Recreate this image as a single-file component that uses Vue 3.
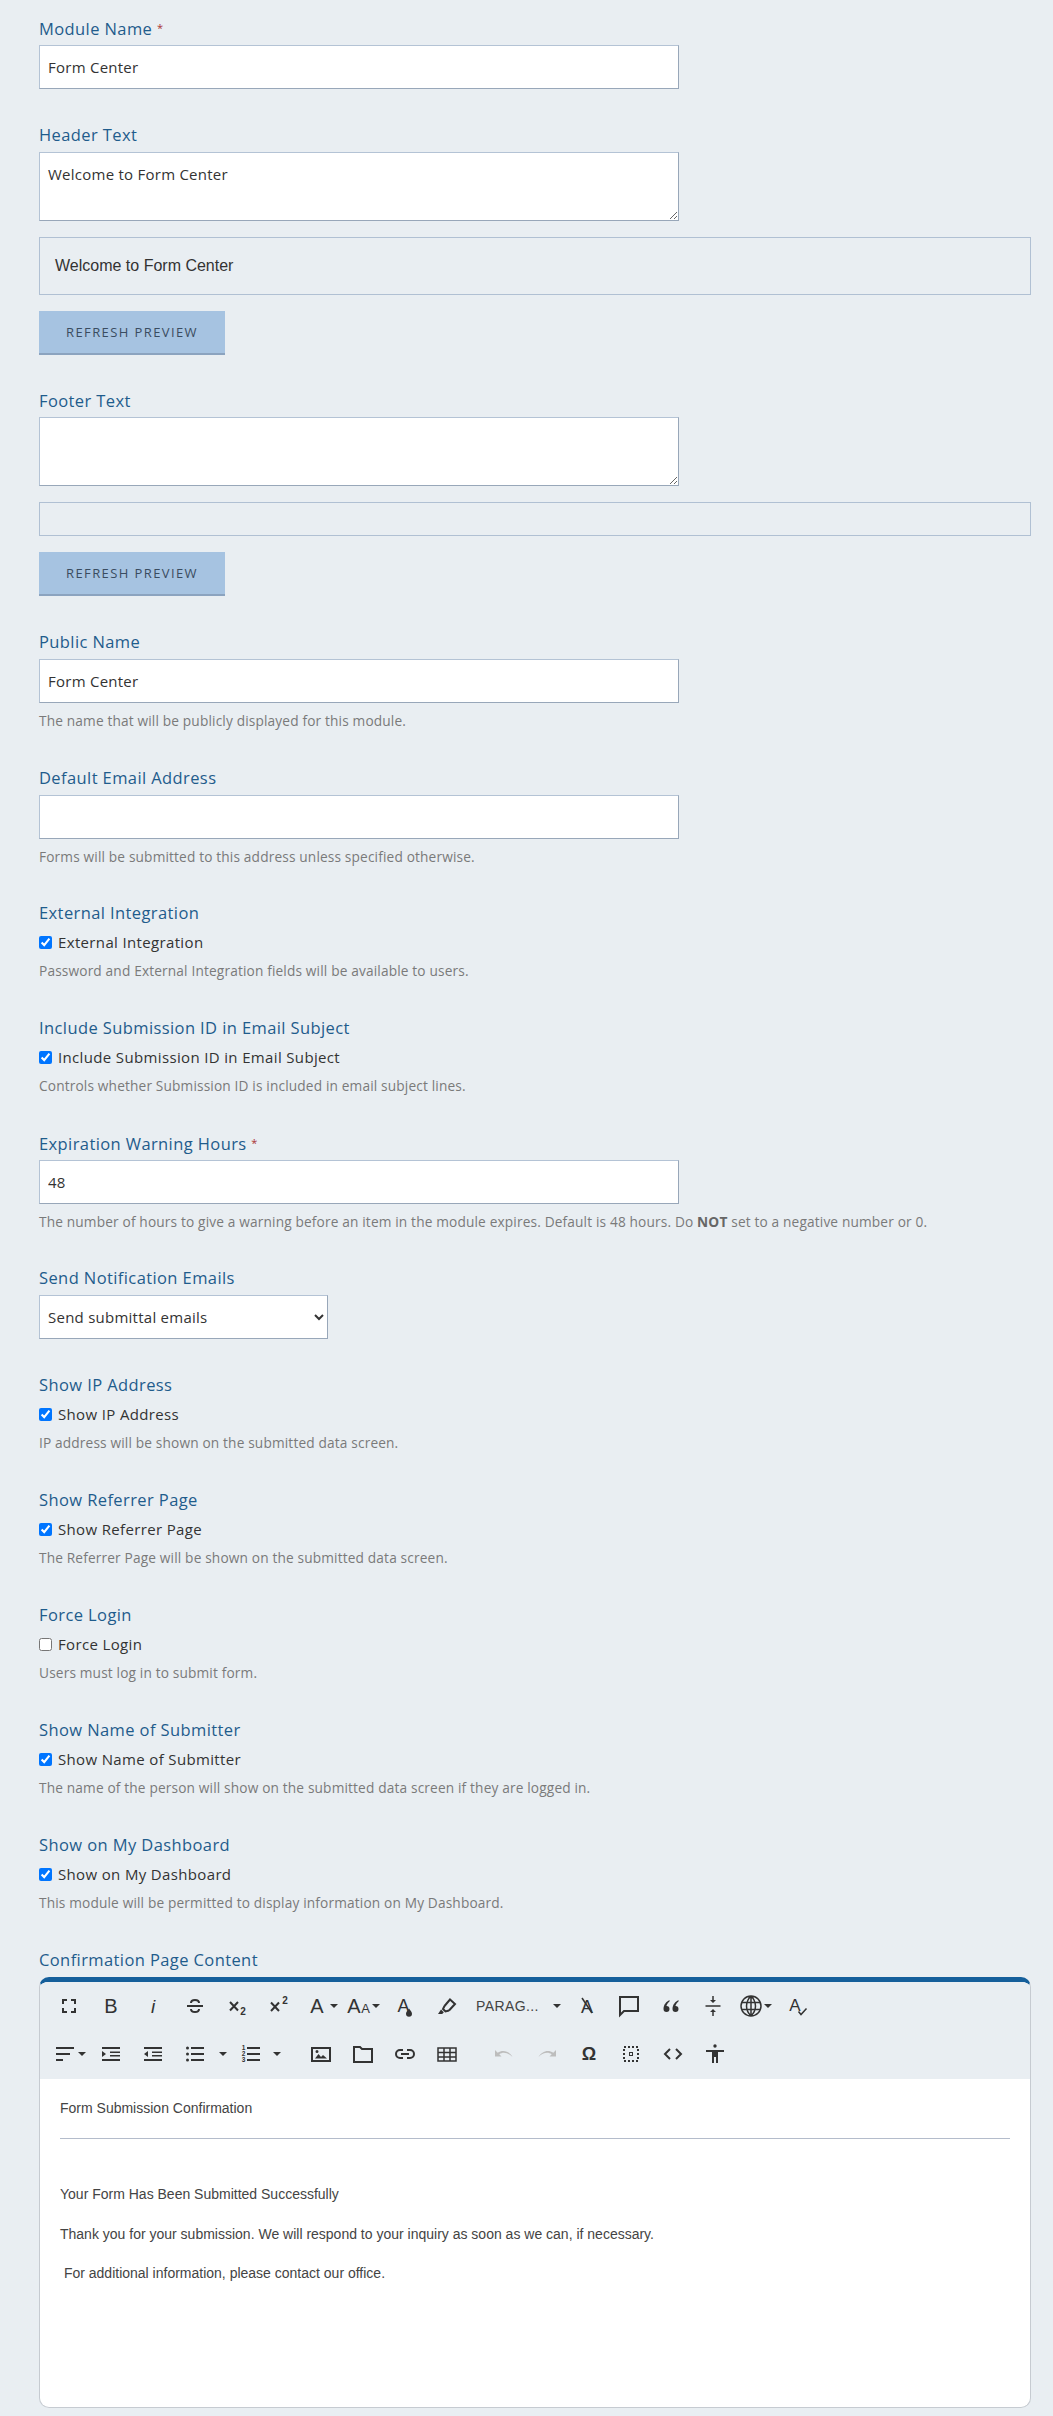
<script setup>
const row1 = [
  { d: 'M5 5h5v2H7v3H5zM14 5h5v5h-2V7h-3zM17 14h2v5h-5v-2h3zM5 14h2v3h3v2H5z' },
  { t: [{ x: 12, y: 19, s: 20, w: 500, v: 'B' }] },
  { t: [{ x: 12, y: 19, s: 19, w: 500, i: true, v: 'i' }] },
  { k: 'M8 9c0-2 1.8-3 4-3s4 1 4 3M4 12h16M8 15c0 2 1.8 3 4 3s4-1 4-3' },
  { k: 'M5 8l8 8.5M13 8l-8 8.5', t: [{ x: 18, y: 21, s: 10, w: 700, v: '2' }] },
  { k: 'M4 8.5l8 8.5M12 8.5l-8 8.5', t: [{ x: 18, y: 10, s: 10, w: 700, v: '2' }] },
  { caret: true, t: [{ x: 12, y: 19, s: 20, w: 400, v: 'A' }] },
  { caret: true, t: [{ x: 7, y: 19, s: 20, w: 400, v: 'A' }, { x: 18.5, y: 19, s: 13, w: 400, v: 'A' }] },
  { d: 'M16 14.5c-1.5 2-3 3.5-3 5.2a3 3 0 006 0c0-1.7-1.5-3.2-3-5.2z', t: [{ x: 10.5, y: 18, s: 18, w: 400, v: 'A' }] },
  { d: 'M6 15.5l2.8 2.8-1.6 1.7H3z', k: 'M9.5 12L15 5.5l5 4.5-6 6.5M9.5 12l-1.5 3 2.5 2.5 3.5-1' },
  { para: true },
  { thin: true, k: 'M7 4l10 15', t: [{ x: 12, y: 19, s: 18, w: 400, v: 'A' }] },
  { k: 'M3 3h18v14H7l-4 4z' },
  { d: 'M10.5 6C7.5 7.5 4.5 10.5 4.5 15a3 3 0 1 0 3-3c0 0 .5-2.5 3-4.5zM19.5 6c-3 1.5-6 4.5-6 9a3 3 0 1 0 3-3c0 0 .5-2.5 3-4.5z' },
  { d: 'M11.25 2h1.5v4H15l-3 3-3-3h2.25zM9 18l3-3 3 3h-2.25v4h-1.5v-4zM4.5 11.25h15v1.5h-15z' },
  { caret: true, thin: true, k: 'M2 12a10 10 0 1 0 20 0 10 10 0 1 0-20 0M12 2c-6 6-6 14 0 20M12 2c6 6 6 14 0 20M3 8.5h18M3 15.5h18M12 2v20' },
  { k: 'M13.5 17.5l2.5 3 5.5-6', thin: true, t: [{ x: 10, y: 17, s: 17, w: 400, v: 'A' }] }
]
const row2 = [
  { caret: true, d: 'M3 5h18v2H3zM3 11h14v2H3zM3 17h7v2H3z' },
  { d: 'M3 5h18v2H3zM11 9.5h10V11H11zM11 13h10v1.5H11zM3 17h18v2H3zM3 9l4 3-4 3z' },
  { d: 'M3 5h18v2H3zM11 9.5h10V11H11zM11 13h10v1.5H11zM3 17h18v2H3zM7 9v6l-4-3z' },
  { d: 'M8 5h13v2H8zM8 11h13v2H8zM8 17h13v2H8zM3 6a1.5 1.5 0 1 0 3 0 1.5 1.5 0 1 0-3 0M3 12a1.5 1.5 0 1 0 3 0 1.5 1.5 0 1 0-3 0M3 18a1.5 1.5 0 1 0 3 0 1.5 1.5 0 1 0-3 0' },
  { onlyCaret: true },
  { d: 'M8 5h13v2H8zM8 11h13v2H8zM8 17h13v2H8z', t: [{ x: 4.5, y: 8, s: 6.5, w: 700, v: '1' }, { x: 4.5, y: 14, s: 6.5, w: 700, v: '2' }, { x: 4.5, y: 20, s: 6.5, w: 700, v: '3' }] },
  { onlyCaret: true, gap: true },
  { k: 'M3 6h18v13H3z', d: 'M6 16.5l3.5-4.5 2.5 3 2-2 4 3.5zM6.5 9.5a1.5 1.5 0 1 0 3 0 1.5 1.5 0 1 0-3 0' },
  { k: 'M3 6V5h6l2 2h10v13H3z' },
  { k: 'M10 8H7a4 4 0 0 0 0 8h3M14 8h3a4 4 0 0 1 0 8h-3M8 12h8' },
  { thin: true, k: 'M3 6h18v13H3zM3 10.5h18M3 15h18M9 6v13M15 6v13' },
  { off: true, d: 'M3 8v6.5h6.5l-2.2-2.2c3.5-2.5 8.5-2 13.2 2.7-3-5.5-9.5-8-14.8-4.2z', sep: true },
  { off: true, d: 'M21 8v6.5h-6.5l2.2-2.2c-3.5-2.5-8.5-2-13.2 2.7 3-5.5 9.5-8 14.8-4.2z' },
  { t: [{ x: 12, y: 18, s: 18, w: 700, v: 'Ω' }] },
  { dash: true, k: 'M5 5h14v14H5z', d: 'M10 10h4v4h-4zM11 11v2h2v-2z' },
  { k: 'M9 7l-5 5 5 5M15 7l5 5-5 5' },
  { d: 'M10.3 4a1.7 1.7 0 1 0 3.4 0 1.7 1.7 0 1 0-3.4 0M3 8h18v2h-6v11h-2v-6h-2v6H9V10H3z' }
]
const checks = [
  { label: 'Show IP Address', on: true, help: 'IP address will be shown on the submitted data screen.' },
  { label: 'Show Referrer Page', on: true, help: 'The Referrer Page will be shown on the submitted data screen.' },
  { label: 'Force Login', on: false, help: 'Users must log in to submit form.' },
  { label: 'Show Name of Submitter', on: true, help: 'The name of the person will show on the submitted data screen if they are logged in.' },
  { label: 'Show on My Dashboard', on: true, help: 'This module will be permitted to display information on My Dashboard.' }
]
</script>

<template>
  <main class="page">
    <div class="group">
      <label class="lbl">Module Name <span class="req">*</span></label>
      <input class="ctl" type="text" value="Form Center" />
    </div>

    <div class="group">
      <label class="lbl">Header Text</label>
      <textarea class="ctl area">Welcome to Form Center</textarea>
      <div class="preview">Welcome to Form Center</div>
      <button class="btn" type="button">Refresh Preview</button>
    </div>

    <div class="group footer-group">
      <label class="lbl">Footer Text</label>
      <textarea class="ctl area"></textarea>
      <div class="preview"></div>
      <button class="btn" type="button">Refresh Preview</button>
    </div>

    <div class="group">
      <label class="lbl">Public Name</label>
      <input class="ctl" type="text" value="Form Center" />
      <p class="help wide">The name that will be publicly displayed for this module.</p>
    </div>

    <div class="group">
      <label class="lbl">Default Email Address</label>
      <input class="ctl" type="text" />
      <p class="help">Forms will be submitted to this address unless specified otherwise.</p>
    </div>

    <div class="group">
      <label class="lbl">External Integration</label>
      <label class="chk"><input type="checkbox" checked /><span>External Integration</span></label>
      <p class="help tight">Password and External Integration fields will be available to users.</p>
    </div>

    <div class="group">
      <label class="lbl">Include Submission ID in Email Subject</label>
      <label class="chk"><input type="checkbox" checked /><span>Include Submission ID in Email Subject</span></label>
      <p class="help tight">Controls whether Submission ID is included in email subject lines.</p>
    </div>

    <div class="group">
      <label class="lbl">Expiration Warning Hours <span class="req">*</span></label>
      <input class="ctl" type="text" value="48" />
      <p class="help">The number of hours to give a warning before an item in the module expires. Default is 48 hours. Do <b>NOT</b> set to a negative number or 0.</p>
    </div>

    <div class="group">
      <label class="lbl">Send Notification Emails</label>
      <select class="ctl sel"><option>Send submittal emails</option></select>
    </div>

    <div v-for="c in checks" :key="c.label" class="group">
      <label class="lbl">{{ c.label }}</label>
      <label class="chk"><input type="checkbox" :checked="c.on" /><span>{{ c.label }}</span></label>
      <p class="help tight">{{ c.help }}</p>
    </div>

    <div class="group last">
      <label class="lbl">Confirmation Page Content</label>
      <div class="editor">
        <div class="toolbar">
          <div v-for="(row, ri) in [row1, row2]" :key="ri" class="tbrow">
            <div
              v-for="(b, i) in row"
              :key="i"
              class="tb"
              :class="{ para: b.para, caretbtn: b.caret, caretonly: b.onlyCaret, gapafter: b.gap, sep: b.sep, off: b.off }"
            >
              <template v-if="b.para"><span class="ptxt">PARAG...</span><i class="caret"></i></template>
              <i v-else-if="b.onlyCaret" class="caret"></i>
              <template v-else>
                <svg viewBox="0 0 24 24" class="ico">
                  <path v-if="b.d" :d="b.d" class="fl" />
                  <path v-if="b.k" :d="b.k" class="st" :class="{ thin: b.thin, dash: b.dash }" />
                  <text
                    v-for="(x, n) in b.t || []"
                    :key="n"
                    :x="x.x"
                    :y="x.y"
                    :font-size="x.s"
                    :font-weight="x.w"
                    :font-style="x.i ? 'italic' : 'normal'"
                    class="glyph"
                  >{{ x.v }}</text>
                </svg>
                <i v-if="b.caret" class="caret"></i>
              </template>
            </div>
          </div>
        </div>
        <div class="content">
          <p>Form Submission Confirmation</p>
          <hr />
          <p class="first">Your Form Has Been Submitted Successfully</p>
          <p>Thank you for your submission. We will respond to your inquiry as soon as we can, if necessary.</p>
          <p class="near">&nbsp;For additional information, please contact our office.</p>
        </div>
      </div>
    </div>
  </main>
</template>

<style scoped>
.page {
  box-sizing: border-box;
  width: 1053px;
  padding: 16px 22px 8px 39px;
  font-family: "Open Sans", "Liberation Sans", sans-serif;
  color: #333;
}
.group { margin-bottom: 34px; }
.group.last { margin-bottom: 0; }
.lbl {
  display: block;
  height: 24px;
  margin-bottom: 5px;
  font-size: 16.5px;
  letter-spacing: 0.4px;
  line-height: 24px;
  color: #1f5c8c;
}
.footer-group .lbl { margin-bottom: 4px; }
.req { color: #a33; font-size: 11px; vertical-align: 3px; }
.ctl {
  display: block;
  box-sizing: border-box;
  width: 640px;
  height: 44px;
  margin: 0;
  padding: 0 8px;
  background: #fff;
  border: 1px solid #b4c3d5;
  border-right-color: #98a7b9;
  border-bottom-color: #98a7b9;
  border-radius: 0;
  font: 15px/24px "Open Sans", "Liberation Sans", sans-serif;
  letter-spacing: 0.25px;
  color: #333;
  outline: none;
}
.area { height: 69px; padding: 9px 8px; resize: both; }
.sel { width: 289px; padding: 0 4px; }
.preview {
  box-sizing: border-box;
  width: 992px;
  margin-top: 16px;
  padding: 16px 15px;
  border: 1px solid #b0c0d3;
  font: 16px/24px "Liberation Sans", Arial, sans-serif;
  color: #333;
}
.btn {
  display: block;
  box-sizing: border-box;
  width: 186px;
  height: 44px;
  margin-top: 16px;
  padding: 0;
  background: #a6c3e1;
  border: 0;
  border-bottom: 2px solid #8ba3bf;
  font: 13px/42px "Open Sans", "Liberation Sans", sans-serif;
  letter-spacing: 1.4px;
  text-transform: uppercase;
  color: #3a4c60;
}
.help {
  height: 20px;
  margin: 8px 0 0;
  font-size: 13.7px;
  letter-spacing: 0.15px;
  line-height: 20px;
  color: #7a7a7a;
}
.help.wide { height: 21px; }
.help.tight { height: 23px; margin-top: 5px; line-height: 23px; }
.help b { font-weight: 700; color: #666; }
.chk {
  display: flex;
  align-items: center;
  gap: 6px;
  height: 24px;
  font-size: 15px;
  letter-spacing: 0.35px;
  color: #333;
}
.chk input { width: 13px; height: 13px; margin: 0; accent-color: #0075ff; }
.editor {
  box-sizing: border-box;
  width: 992px;
  height: 431px;
  background: #fff;
  border: 1px solid #c6cbd1;
  border-top: 5px solid #155f9b;
  border-radius: 10px;
  overflow: hidden;
}
.toolbar {
  box-sizing: border-box;
  height: 97px;
  padding-left: 8px;
  background: #e9eef2;
}
.tbrow { display: flex; height: 48px; }
.tb {
  display: flex;
  align-items: center;
  justify-content: center;
  flex: none;
  width: 42px;
  height: 48px;
}
.tb.caretbtn { justify-content: flex-start; padding-left: 5px; box-sizing: border-box; }
.tb.caretbtn .caret { margin-left: 1px; }
.tb.caretonly { width: 14px; }
.tb.gapafter { width: 10px; margin-right: 18px; }
.tb.sep { margin-left: 15px; margin-right: 1px; }
.tb.para {
  justify-content: space-between;
  box-sizing: border-box;
  width: 98px;
  padding: 0 5px 0 8px;
}
.ptxt {
  font: 14px/20px "Liberation Sans", Arial, sans-serif;
  letter-spacing: 0.4px;
  color: #444;
}
.ico { flex: none; width: 24px; height: 24px; overflow: visible; }
.fl { fill: #333; }
.st { fill: none; stroke: #333; stroke-width: 2; }
.st.thin { stroke-width: 1.5; }
.st.dash { stroke-dasharray: 2 2; }
.off .fl { fill: #bdbdbd; }
.glyph {
  font-family: "Liberation Sans", Arial, sans-serif;
  text-anchor: middle;
  fill: #333;
}
.caret {
  display: block;
  flex: none;
  width: 0;
  height: 0;
  border-left: 4px solid transparent;
  border-right: 4px solid transparent;
  border-top: 4px solid #333;
}
.content {
  padding: 19px 20px 0;
  font: 14px/20px "Liberation Sans", Arial, sans-serif;
  color: #444;
}
.content p { margin: 0 0 20px; }
.content p.near { margin-top: -1px; }
.content hr {
  height: 1px;
  margin: 0;
  border: 0;
  background: #b4bccb;
}
.content .first { margin-top: 45px; }
</style>

<style>
html, body { background: #e9eef2; }
</style>
